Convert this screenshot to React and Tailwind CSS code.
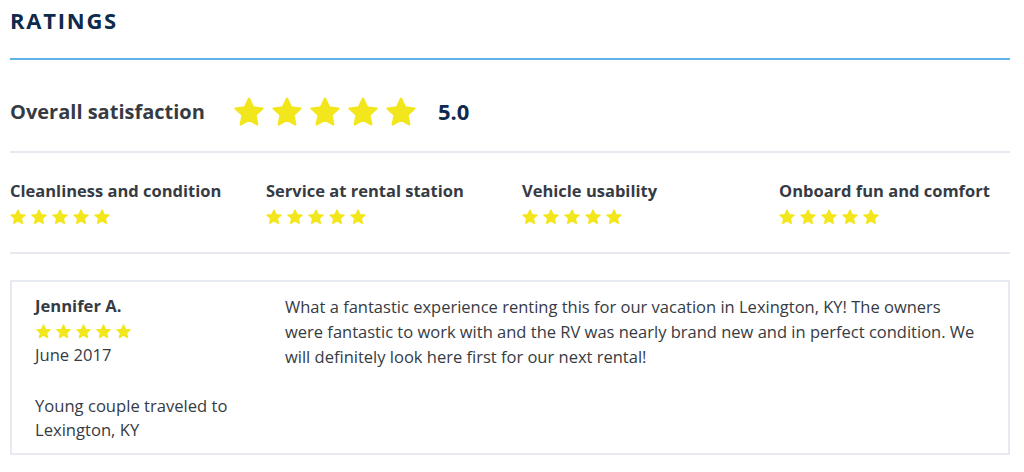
import React from 'react';

const Star = ({ className }) => (
  <svg viewBox="0 0 24 24" className={className}>
    <polygon
      points="12,2.5 14.9,8.7 21.6,9.5 16.6,14.1 17.9,20.8 12,17.5 6.1,20.8 7.4,14.1 2.4,9.5 9.1,8.7"
      fill="#f2e61c"
      stroke="#f2e61c"
      strokeWidth="1.5"
      strokeLinejoin="round"
    />
  </svg>
);

const Stars = ({ size, gap }) => (
  <div className={`flex ${gap}`}>
    {[0, 1, 2, 3, 4].map((i) => (
      <Star key={i} className={size} />
    ))}
  </div>
);

const categories = [
  'Cleanliness and condition',
  'Service at rental station',
  'Vehicle usability',
  'Onboard fun and comfort',
];

export default function App() {
  return (
    <div className="w-[1024px] h-[472px] bg-white px-[10px] text-[#363b43] font-['Open_Sans',sans-serif] overflow-hidden">
      <div className="w-[1000px]">
        <h2 className="pt-[5px] h-[58px] text-[22px] leading-[30px] font-bold tracking-[0.08em] text-[#0e2a4c]">
          RATINGS
        </h2>
        <div className="h-[2px] bg-[#5db4e5]" />

        <div className="flex items-center h-[91px] pt-[12px]">
          <div className="text-[20px] font-bold w-[222px]">Overall satisfaction</div>
          <Stars size="w-[34px] h-[34px]" gap="gap-[4px]" />
          <div className="ml-[20px] text-[22px] font-bold text-[#0e2a4c]">5.0</div>
        </div>
        <div className="h-[2px] bg-[#e7eaf0]" />

        <div className="grid grid-cols-[256px_256px_257px_1fr] h-[99px] pt-[27px]">
          {categories.map((c) => (
            <div key={c}>
              <div className="text-[16.5px] leading-[22px] font-bold">{c}</div>
              <div className="mt-[6px] -ml-[1px]">
                <Stars size="w-[18px] h-[18px]" gap="gap-[3px]" />
              </div>
            </div>
          ))}
        </div>
        <div className="h-[2px] bg-[#e7eaf0]" />

        <div className="mt-[26px] border-2 border-[#e7eaf0] h-[175px] flex pt-[12px] pl-[23px]">
          <div className="w-[250px] text-[16.6px] leading-[24px]">
            <div className="font-bold">Jennifer A.</div>
            <div className="mt-[5px] mb-[3px]">
              <Stars size="w-[17px] h-[17px]" gap="gap-[3px]" />
            </div>
            <div>June 2017</div>
            <div className="mt-[27px]">Young couple traveled to<br />Lexington, KY</div>
          </div>
          <p className="w-[693px] text-[16.5px] leading-[25px]">
            What a fantastic experience renting this for our vacation in Lexington, KY! The owners were fantastic to work with and the RV was nearly brand new and in perfect condition. We will definitely look here first for our next rental!
          </p>
        </div>
      </div>
    </div>
  );
}
